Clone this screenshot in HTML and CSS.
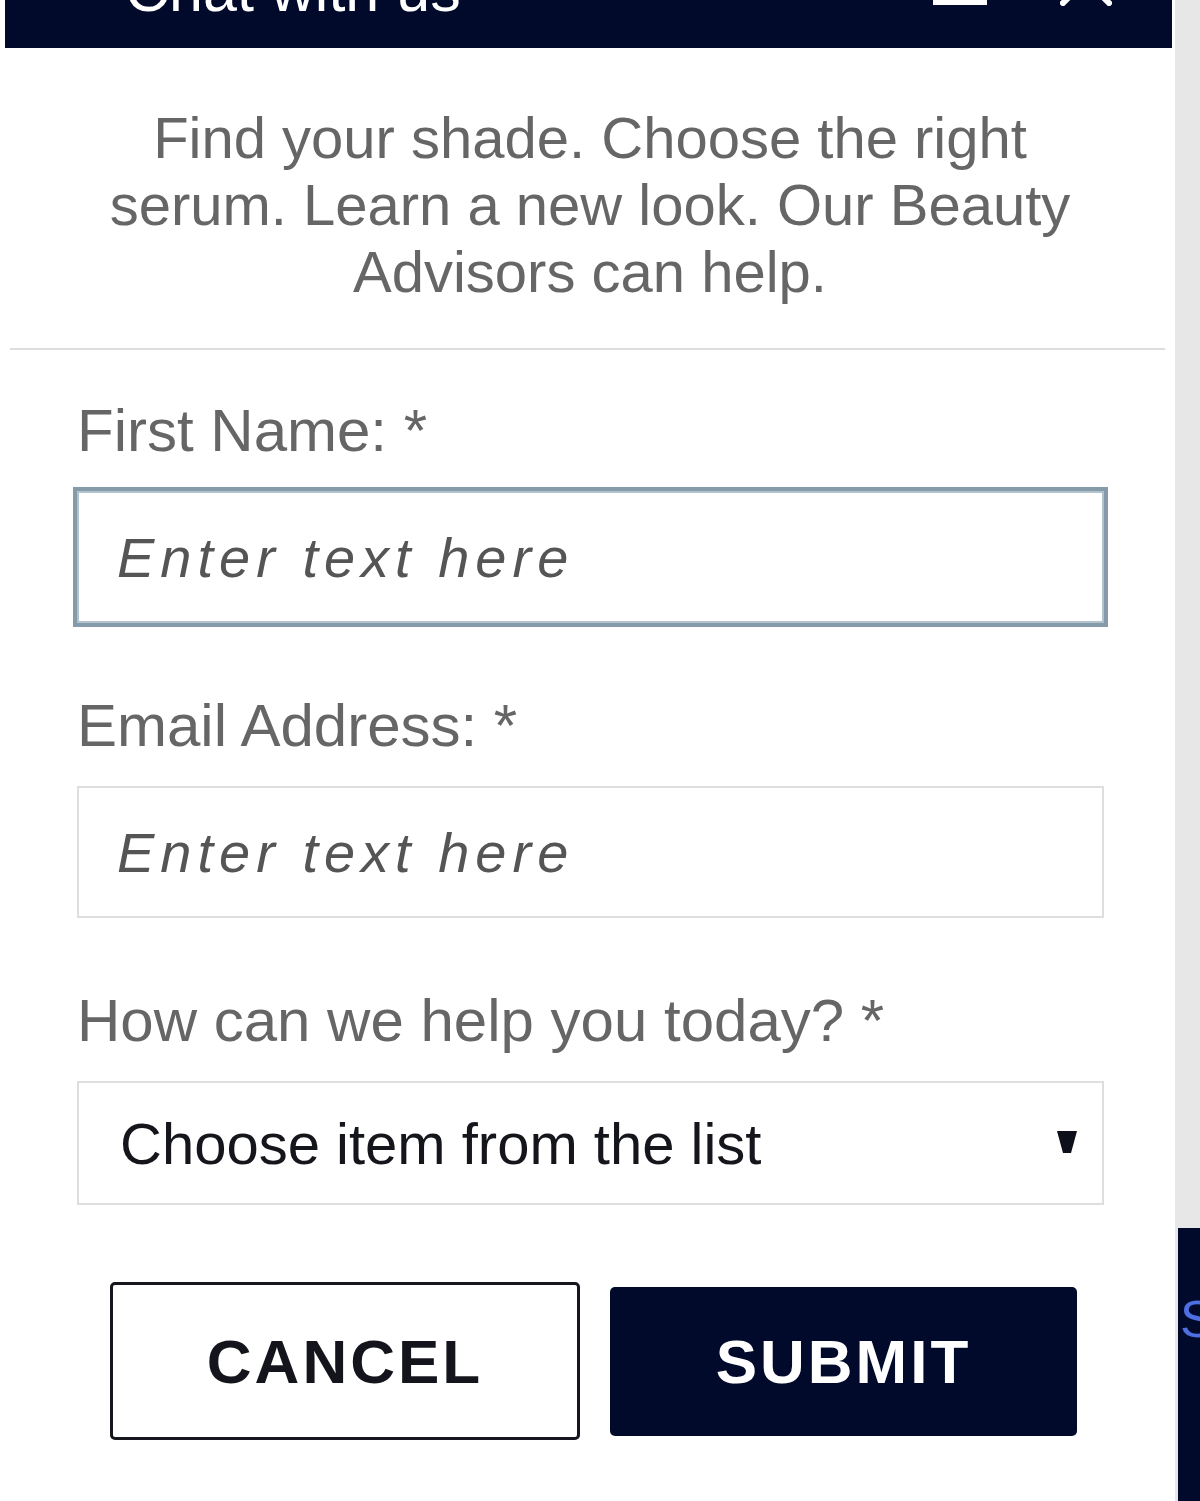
FILE: index.html
```html
<!DOCTYPE html>
<html lang="en">
<head>
<meta charset="utf-8">
<title>Chat with us</title>
<link rel="stylesheet" href="styles.css">
</head>
<body>
<div class="page">
  <div class="panel">
    <div class="panel-header">
      <span class="title">Chat with us</span>
      <svg class="icon-min" width="54" height="5" viewBox="0 0 54 5" aria-hidden="true"><rect x="0" y="0" width="54" height="5" fill="#ffffff"/></svg>
      <svg class="icon-close" width="52" height="52" viewBox="0 0 52 52" aria-hidden="true"><path d="M3 3 L49 49 M49 3 L3 49" stroke="#ffffff" stroke-width="6" stroke-linecap="square"/></svg>
    </div>
    <p class="intro">Find your shade. Choose the right serum. Learn a new look. Our Beauty Advisors can help.</p>
    <div class="divider"></div>
    <form class="form">
      <div class="field">
        <label class="label" for="fname">First Name: *</label>
        <input class="text-input is-focused" id="fname" type="text" placeholder="Enter text here">
      </div>
      <div class="field">
        <label class="label" for="email">Email Address: *</label>
        <input class="text-input" id="email" type="text" placeholder="Enter text here">
      </div>
      <div class="field field-last">
        <label class="label" for="help">How can we help you today? *</label>
        <div class="select-wrap">
          <select class="select" id="help">
            <option>Choose item from the list</option>
          </select>
          <svg class="select-arrow" width="20" height="24" viewBox="0 0 20 24" aria-hidden="true"><path d="M0 0 H20 L14 22 H6 Z" fill="#0d0f1a"/></svg>
        </div>
      </div>
      <div class="actions">
        <button type="button" class="btn btn-cancel">CANCEL</button>
        <button type="button" class="btn btn-submit">SUBMIT</button>
      </div>
    </form>
  </div>
  <div class="side">
    <div class="side-box"><span class="side-text">Shop</span></div>
  </div>
</div>
</body>
</html>
```

FILE: styles.css
```css
html, body {
  margin: 0;
  padding: 0;
}
body {
  background: #ffffff;
  width: 1200px;
  height: 1501px;
  overflow: hidden;
  font-family: "Liberation Sans", Arial, sans-serif;
}
.page {
  display: flex;
  height: 1501px;
}
.panel {
  width: 1170px;
  margin-left: 5px;
  background: #ffffff;
  flex: none;
}
.panel-header {
  height: 48px;
  margin-right: 3px;
  background: #020a2c;
  display: flex;
  align-items: flex-start;
  padding: 0 60px 0 120px;
  overflow: hidden;
}
.title {
  flex: 1;
  color: #ffffff;
  font-size: 61px;
  line-height: 61px;
  margin-top: -40px;
  white-space: nowrap;
}
.icon-min {
  display: block;
  margin-top: 0;
}
.icon-close {
  display: block;
  margin-left: 73px;
  margin-top: -46px;
}
.intro {
  margin: 0;
  padding: 56px 80px 43px;
  text-align: center;
  color: #666666;
  font-size: 58px;
  line-height: 67px;
}
.divider {
  height: 0;
  border-top: 2px solid #dddddd;
  margin: 0 10px 0 5px;
}
.form {
  padding: 46px 71px 0 72px;
}
.field {
  margin-bottom: 68px;
}
.field-last {
  margin-bottom: 0;
}
.label {
  display: block;
  color: #666666;
  font-size: 60px;
  line-height: 70px;
  margin-bottom: 25px;
}
.text-input {
  display: block;
  box-sizing: border-box;
  width: 100%;
  height: 132px;
  margin: 0;
  border: 2px solid #dedede;
  background: #ffffff;
  padding: 0 20px 0 38px;
  font-family: "Liberation Sans", Arial, sans-serif;
  font-style: italic;
  font-size: 56px;
  letter-spacing: 6px;
  color: #444444;
  outline: none;
  border-radius: 0;
}
.text-input::placeholder {
  color: #555555;
  opacity: 1;
}
.text-input.is-focused {
  border-color: #b3c3ce;
  box-shadow: 0 0 0 4px #859baa;
}
.select-wrap {
  position: relative;
}
.select {
  display: block;
  box-sizing: border-box;
  width: 100%;
  height: 124px;
  margin: 0;
  border: 2px solid #dedede;
  border-radius: 0;
  background: #ffffff;
  padding: 0 60px 0 41px;
  font-family: "Liberation Sans", Arial, sans-serif;
  font-size: 58px;
  color: #15161c;
  appearance: none;
  -webkit-appearance: none;
  outline: none;
}
.select-arrow {
  position: absolute;
  right: 27px;
  top: 50px;
  display: block;
}
.actions {
  display: flex;
  align-items: center;
  gap: 30px;
  margin-top: 77px;
  padding-left: 33px;
}
.btn {
  box-sizing: border-box;
  font-family: "Liberation Sans", Arial, sans-serif;
  font-weight: bold;
  font-size: 62px;
  letter-spacing: 3px;
  border-radius: 5px;
  padding: 0;
  margin: 0;
  cursor: pointer;
}
.btn-cancel {
  width: 470px;
  height: 158px;
  background: #ffffff;
  color: #14151c;
  border: 3px solid #15161e;
}
.btn-submit {
  width: 467px;
  height: 149px;
  background: #020a2c;
  color: #ffffff;
  border: none;
}
.side {
  flex: 1;
  background: #e7e7e7;
  padding-top: 1228px;
  overflow: hidden;
}
.side-box {
  height: 273px;
  margin-left: 3px;
  background: #020a2c;
  overflow: hidden;
  padding-top: 65px;
  box-sizing: border-box;
}
.side-text {
  display: block;
  padding-left: 2px;
  color: #4d6fe3;
  font-size: 52px;
  line-height: 52px;
  white-space: nowrap;
}
```
